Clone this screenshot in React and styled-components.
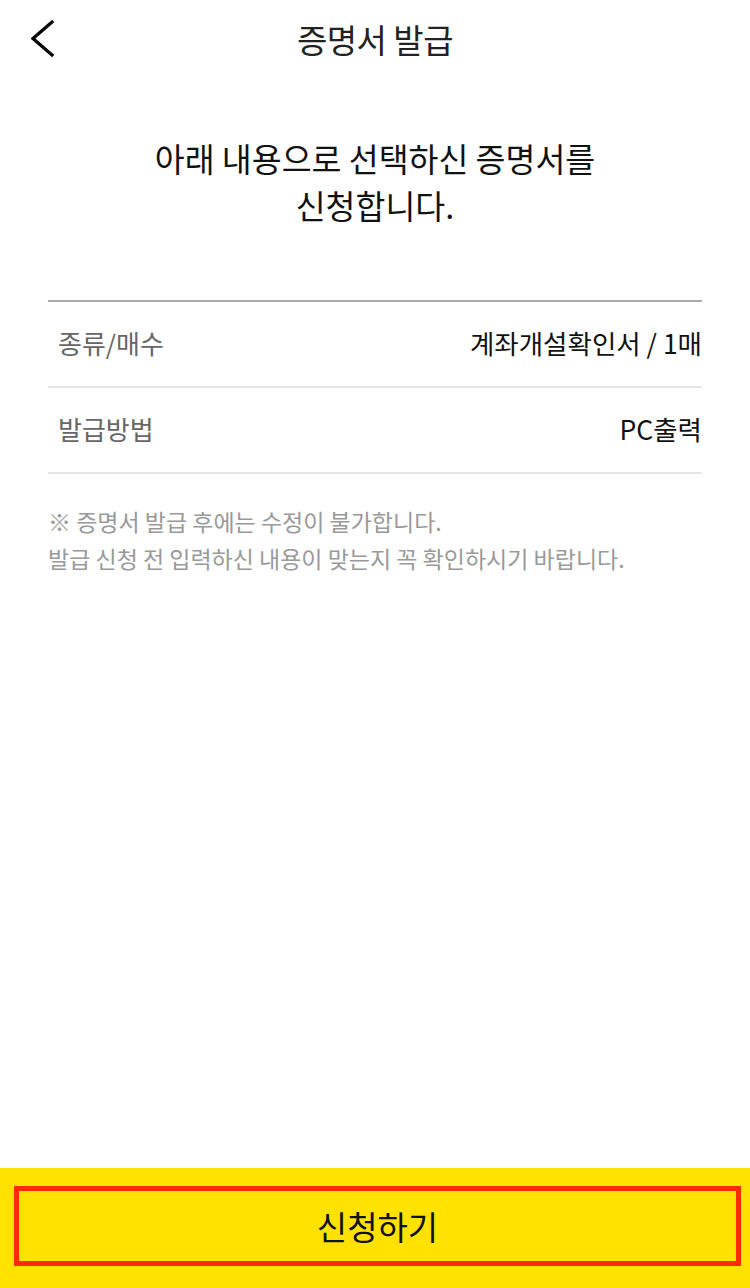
import styled, { createGlobalStyle } from "styled-components";

const GlobalStyle = createGlobalStyle`
  html, body {
    margin: 0;
    padding: 0;
    background: #fff;
  }
  body {
    font-family: "Noto Sans CJK KR", "Noto Sans", sans-serif;
    color: #111;
  }
`;

const rows = [
  { label: "종류/매수", value: "계좌개설확인서 / 1매" },
  { label: "발급방법", value: "PC출력" },
];

const App = () => {
  return (
    <>
      <GlobalStyle />
      <Page>
        <Header>
          <BackButton aria-label="뒤로">
            <svg width="40" height="44" viewBox="0 0 40 44" fill="none">
              <polyline
                points="21,5 2,21.5 21,38"
                stroke="#000"
                strokeWidth="3.2"
                strokeLinecap="square"
              />
            </svg>
          </BackButton>
          <Title>증명서 발급</Title>
        </Header>

        <Content>
          <Lead>
            아래 내용으로 선택하신 증명서를
            <br />
            신청합니다.
          </Lead>

          <InfoList>
            {rows.map((r) => (
              <InfoRow key={r.label}>
                <Label>{r.label}</Label>
                <Value>{r.value}</Value>
              </InfoRow>
            ))}
          </InfoList>

          <Notice>
            <p>※ 증명서 발급 후에는 수정이 불가합니다.</p>
            <p>발급 신청 전 입력하신 내용이 맞는지 꼭 확인하시기 바랍니다.</p>
          </Notice>
        </Content>

        <Footer>
          <SubmitButton>신청하기</SubmitButton>
        </Footer>
      </Page>
    </>
  );
};
export default App;

const Page = styled.div`
  width: 750px;
  height: 1288px;
  display: flex;
  flex-direction: column;
  background: #fff;
`;

const Header = styled.header`
  position: relative;
  height: 78px;
  display: flex;
  align-items: center;
  justify-content: center;
`;

const BackButton = styled.button`
  position: absolute;
  left: 31px;
  top: 17px;
  padding: 0;
  border: none;
  background: none;
  display: flex;
`;

const Title = styled.h1`
  margin: 0;
  font-size: 33px;
  font-weight: 400;
  color: #222;
  letter-spacing: -0.5px;
`;

const Content = styled.main`
  flex: 1;
  padding: 0 48px;
`;

const Lead = styled.p`
  margin: 56px 0 0;
  text-align: center;
  font-size: 32.5px;
  line-height: 47px;
  font-weight: 400;
  color: #111;
  letter-spacing: 0;
`;

const InfoList = styled.div`
  margin-top: 72px;
  border-top: 2px solid #aaa;
`;

const InfoRow = styled.div`
  display: flex;
  justify-content: space-between;
  align-items: center;
  height: 80px;
  padding: 0 0 4px 10px;
  border-bottom: 2px solid #e6e6e6;
`;

const Label = styled.span`
  font-size: 26px;
  color: #666;
  letter-spacing: 0;
`;

const Value = styled.span`
  font-size: 26.5px;
  color: #111;
  letter-spacing: 0;
`;

const Notice = styled.div`
  margin-top: 29px;
  p {
    margin: 0;
    font-size: 23px;
    line-height: 37px;
    color: #999;
    letter-spacing: 0;
  }
`;

const Footer = styled.footer`
  height: 120px;
  background: #ffe200;
  padding: 18px 9px 22px 14px;
  box-sizing: border-box;
  display: flex;
`;

const SubmitButton = styled.button`
  flex: 1;
  border: 5px solid #ff2a00;
  background: transparent;
  font-family: "Noto Sans CJK KR", "Noto Sans", sans-serif;
  font-size: 33px;
  color: #111;
  letter-spacing: 0;
  padding: 0;
`;
